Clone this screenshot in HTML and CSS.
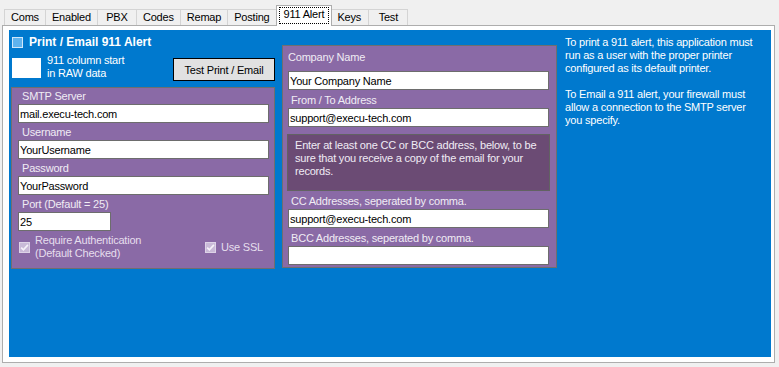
FILE: index.html
```html
<!DOCTYPE html>
<html lang="en">
<head>
    <meta charset="UTF-8">
    <title>911 Alert</title>
    <link rel="stylesheet" href="styles.css">
</head>
<body>
    <div class="tabs">
        <div class="tab">Coms</div>
        <div class="tab">Enabled</div>
        <div class="tab">PBX</div>
        <div class="tab">Codes</div>
        <div class="tab">Remap</div>
        <div class="tab">Posting</div>
        <div class="tab tab-active"><span class="tab-focus">911 Alert</span></div>
        <div class="tab">Keys</div>
        <div class="tab">Test</div>
    </div>

    <div class="tab-page">
        <div class="alert-page">
            <div class="left-col">
                <div class="title-row">
                    <span class="check-blue"></span>
                    <span class="title">Print / Email 911 Alert</span>
                </div>

                <div class="raw-row">
                    <input class="raw-box" type="text">
                    <div class="raw-text">911 column start<br>in RAW data</div>
                    <button class="test-btn">Test Print / Email</button>
                </div>

                <div class="group smtp">
                    <label class="field-label first">SMTP Server</label>
                    <input class="field" type="text" value="mail.execu-tech.com">
                    <label class="field-label">Username</label>
                    <input class="field" type="text" value="YourUsername">
                    <label class="field-label">Password</label>
                    <input class="field" type="text" value="YourPassword">
                    <label class="field-label">Port (Default = 25)</label>
                    <input class="field port" type="text" value="25">

                    <div class="checks">
                        <label class="check-line">
                            <svg class="check-box" width="11" height="11" viewBox="0 0 11 11">
                                <rect x="0.5" y="0.5" width="10" height="10" fill="#c9bad8" stroke="#ddd3e7"/>
                                <path d="M2.2 5.6 L4.4 7.9 L8.9 2.9" fill="none" stroke="#f6f2f9" stroke-width="1.6"/>
                            </svg>
                            <span>Require Authentication<br>(Default Checked)</span>
                        </label>
                        <label class="check-line ssl">
                            <svg class="check-box" width="11" height="11" viewBox="0 0 11 11">
                                <rect x="0.5" y="0.5" width="10" height="10" fill="#c9bad8" stroke="#ddd3e7"/>
                                <path d="M2.2 5.6 L4.4 7.9 L8.9 2.9" fill="none" stroke="#f6f2f9" stroke-width="1.6"/>
                            </svg>
                            <span>Use SSL</span>
                        </label>
                    </div>
                </div>
            </div>

            <div class="group company">
                <label class="field-label first">Company Name</label>
                <input class="field" type="text" value="Your Company Name">
                <label class="field-label">From / To Address</label>
                <input class="field" type="text" value="support@execu-tech.com">

                <div class="notice">
                    Enter at least one CC or BCC address, below, to be<br>
                    sure that you receive a copy of the email for your<br>
                    records.
                </div>

                <label class="field-label">CC Addresses, seperated by comma.</label>
                <input class="field" type="text" value="support@execu-tech.com">
                <label class="field-label">BCC Addresses, seperated by comma.</label>
                <input class="field" type="text" value="">
            </div>

            <div class="info">
                <p>To print a 911 alert, this application must<br>
                run as a user with the proper printer<br>
                configured as its default printer.</p>
                <p>To Email a 911 alert, your firewall must<br>
                allow a connection to the SMTP server<br>
                you specify.</p>
            </div>
        </div>
    </div>
</body>
</html>
```

FILE: styles.css
```css
body {
    margin: 0;
    padding: 0;
    font-family: "Liberation Sans", Arial, sans-serif;
    font-size: 11px;
    letter-spacing: -0.2px;
    background-color: #f0f0f0;
    color: #000;
}

/* tab strip */
.tabs {
    display: flex;
    align-items: flex-end;
    height: 21px;
    margin-top: 5px;
    margin-bottom: -1px;
    padding-left: 4px;
    position: relative;
    z-index: 1;
}

.tab {
    box-sizing: border-box;
    min-width: 40px;
    height: 16px;
    margin-bottom: 1px;
    padding: 0 6px;
    line-height: 15px;
    text-align: center;
    background-color: #f0f0f0;
    border: 1px solid #d4d4d4;
    border-bottom: none;
}

.tab + .tab {
    margin-left: -1px;
}

.tab-active {
    height: 21px;
    margin: 0 -2px;
    padding: 1px 2px 0;
    background-color: #fff;
    border-color: #adadad;
    position: relative;
    z-index: 2;
}

.tab-focus {
    display: inline-block;
    padding: 0 4px 2px;
    line-height: 13px;
    border: 1px dotted #000;
}

.tab-page {
    margin: 0 4px 0 2px;
    padding: 4px 3px 5px 6px;
    background-color: #fff;
    border: 1px solid #adadad;
}

.alert-page {
    display: flex;
    align-items: flex-start;
    height: 327px;
    padding-left: 3px;
    background-color: #0079ce;
    color: #fff;
}

/* left column */
.left-col {
    width: 263px;
    flex-shrink: 0;
}

.title-row {
    display: flex;
    align-items: center;
    height: 12px;
    margin-top: 6px;
}

.check-blue {
    box-sizing: border-box;
    width: 11px;
    height: 11px;
    background-color: #5fb3ee;
    border: 1px solid #cfe7fa;
}

.title {
    margin-left: 6px;
    font-size: 12px;
    font-weight: bold;
    letter-spacing: 0;
    line-height: 14px;
}

.raw-row {
    display: flex;
    align-items: flex-start;
    margin-top: 6px;
}

.raw-box {
    box-sizing: border-box;
    width: 29px;
    height: 20px;
    margin-top: 4px;
    border: none;
    background-color: #fff;
}

.raw-text {
    margin-left: 6px;
    line-height: 13px;
}

.test-btn {
    width: 102px;
    height: 23px;
    margin: 4px 0 0 auto;
    padding: 0;
    font-family: inherit;
    font-size: 11px;
    letter-spacing: inherit;
    color: #000;
    background-color: #e1e1e1;
    border: 1px solid #000;
}

/* purple groups */
.group {
    box-sizing: border-box;
    background-color: #8a6aa6;
    border: 1px solid #6f6f6f;
    color: #f0ecf4;
}

.smtp {
    width: 264px;
    margin: 6px 0 0 -1px;
    padding: 0 5px 8px 6px;
}

.company {
    width: 275px;
    margin: 15px 0 0 7px;
    padding: 0 7px 2px 5px;
}

.field-label {
    display: block;
    padding: 3px 0 1px 4px;
    line-height: 13px;
}

.smtp .field-label.first {
    padding-top: 2px;
}

.company .field-label {
    padding: 4px 0 1px 3px;
}

.company .field-label.first {
    padding: 5px 0 7px 0;
}

.field {
    display: block;
    box-sizing: border-box;
    width: 100%;
    height: 19px;
    margin: 0;
    padding: 0 1px;
    font-family: inherit;
    font-size: 11px;
    letter-spacing: inherit;
    color: #000;
    background-color: #fff;
    border: 1px solid #6d6d6d;
    outline: none;
}

.field.port {
    width: 93px;
}

.checks {
    display: flex;
    align-items: center;
    margin-top: 3px;
    line-height: 13px;
    color: #e6deed;
}

.check-line {
    display: flex;
    align-items: center;
}

.check-box {
    display: block;
    margin: 0 5px 0 1px;
}

.ssl {
    margin-left: auto;
    padding-right: 6px;
}

.notice {
    box-sizing: border-box;
    width: 263px;
    height: 57px;
    margin: 7px 0 0 -1px;
    padding: 4px 4px 0 7px;
    line-height: 13px;
    background-color: #6b4b74;
    border: 1px solid #626262;
    color: #f0ecf4;
}

/* help text */
.info {
    margin: 6px 0 0 8px;
    line-height: 13px;
}

.info p {
    margin: 0;
}

.info p + p {
    margin-top: 13px;
}
```
